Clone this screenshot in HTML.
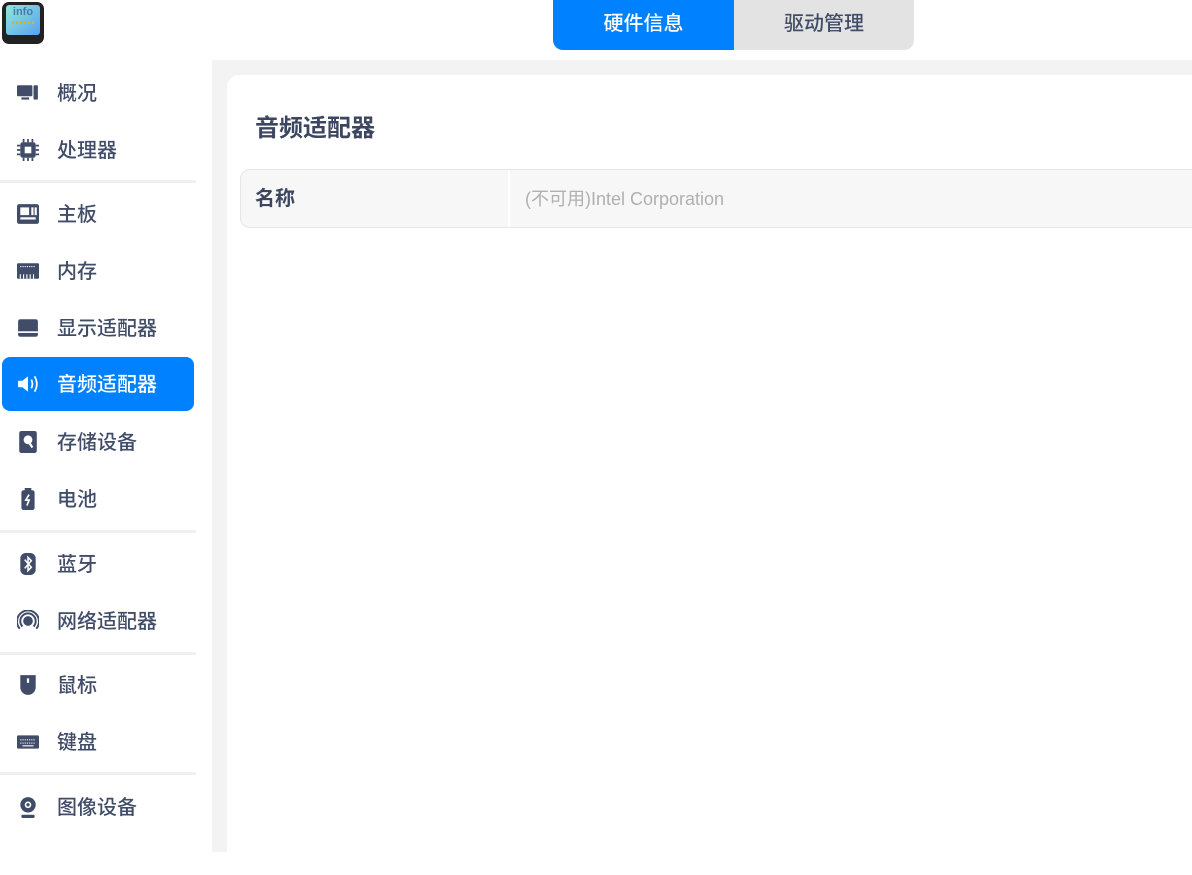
<!DOCTYPE html>
<html><head><meta charset="utf-8"><style>
*{margin:0;padding:0;box-sizing:border-box}
body{width:1192px;height:852px;overflow:hidden;background:#fff;font-family:"Liberation Sans","Noto Sans CJK SC",sans-serif;position:relative;color:#414d68}
.top{position:absolute;left:0;top:0;width:1192px;height:60px;background:#fff}
.logo{position:absolute;left:2px;top:2px;width:42px;height:42px;border-radius:7px;background:#222;padding:3px 4px}
.logo div{width:100%;height:30px;border-radius:3px;background:linear-gradient(135deg,#8fe8d8,#5aa0f0);font-size:11px;color:#4a7aa8;text-align:center;font-weight:bold;line-height:14px}
.logo i{display:block;margin:2px auto 0;width:22px;height:3px;background:repeating-linear-gradient(90deg,#e8b000 0 2px,transparent 2px 4px)}
.tabs{position:absolute;left:553px;top:0;width:361px;height:50px;border-radius:0 0 10px 10px;overflow:hidden;display:flex;font-size:20px;font-weight:500}
.tabs div{height:50px;line-height:48px;text-align:center}
.t1{width:181px;background:#0081ff;color:#fff}
.t2{width:180px;background:#e3e3e3;color:#414d68}
.grey{position:absolute;left:0;top:60px;width:1192px;height:792px;background:#f3f3f3}
.side{position:absolute;left:0;top:60px;width:212px;height:792px;background:#fff}
.item{position:absolute;left:2px;width:192px;height:54px;font-size:20px;font-weight:500;line-height:56px;padding-left:55px;color:#414d68}
.item.act{background:#0081ff;color:#fff;border-radius:8px}
.ic{position:absolute;left:15px;top:16px;width:22px;height:22px}
.sep{position:absolute;left:0;width:196px;height:3px;background:#f0f0f0}
.card{position:absolute;left:227px;top:75px;width:980px;height:800px;background:#fff;border-radius:12px 0 0 0}
.title{position:absolute;left:255px;top:108px;font-size:24px;font-weight:bold;color:#3c4660}
.tbl{position:absolute;left:240px;top:169px;width:970px;height:59px;background:#f7f7f7;border:1px solid #e6e6e6;border-radius:10px 0 0 10px}
.tbl .k{position:absolute;left:14px;top:1px;line-height:57px;font-size:20px;font-weight:bold;color:#3c4660}
.tbl .d{position:absolute;left:267px;top:0;width:2px;height:57px;background:#fff}
.tbl .v{position:absolute;left:284px;top:1px;line-height:57px;font-size:18px;color:#b0b0b0}
</style></head><body>
<div class="top"></div>
<div class="logo"><div>info<i></i></div></div>
<div class="tabs"><div class="t1">硬件信息</div><div class="t2">驱动管理</div></div>
<div class="grey"></div>
<div class="side"></div>
<div class="item" style="top:66px"><svg class="ic" viewBox="0 0 20 20" fill="#414d68"><rect x="0" y="3" width="14" height="10" rx="1"/><rect x="4" y="14" width="7" height="2"/><rect x="15" y="3" width="4" height="13" rx="1"/></svg>概况</div>
<div class="item" style="top:123px"><svg class="ic" viewBox="0 0 20 20" fill="#414d68"><rect x="3" y="3" width="14" height="14" rx="2"/><path d="M6 0v3M10 0v3M14 0v3M6 17v3M10 17v3M14 17v3M0 6h3M0 10h3M0 14h3M17 6h3M17 10h3M17 14h3" stroke="#414d68" stroke-width="1.6"/><rect x="7" y="7" width="6" height="6" fill="#fff"/></svg>处理器</div>
<div class="sep" style="top:180px"></div>
<div class="item" style="top:187px"><svg class="ic" viewBox="0 0 20 20" fill="#414d68"><rect x="0" y="1" width="20" height="18" rx="2"/><rect x="3" y="4" width="8" height="7" fill="#fff"/><rect x="13" y="4" width="2" height="7" fill="#fff"/><rect x="16" y="4" width="2" height="7" fill="#fff"/><rect x="3" y="13" width="14" height="2" fill="#fff"/></svg>主板</div>
<div class="item" style="top:244px"><svg class="ic" viewBox="0 0 20 20" fill="#414d68"><rect x="0" y="3" width="20" height="14" rx="1"/><path d="M3 6h14" stroke="#fff" stroke-dasharray="1 1"/><path d="M3 13v4M6 13v4M9 13v4M12 13v4M15 13v4" stroke="#fff"/></svg>内存</div>
<div class="item" style="top:301px"><svg class="ic" viewBox="0 0 20 20" fill="#414d68"><rect x="1" y="2" width="18" height="16" rx="2"/><rect x="1" y="13" width="18" height="1.5" fill="#fff"/></svg>显示适配器</div>
<div class="item act" style="top:357px"><svg class="ic" viewBox="0 0 20 20" fill="#fff"><path d="M1 7h4l5-4v14l-5-4H1z"/><path d="M13 6q2 4 0 8M16 3q4 7 0 14" stroke="#fff" stroke-width="1.6" fill="none"/></svg>音频适配器</div>
<div class="item" style="top:415px"><svg class="ic" viewBox="0 0 20 20" fill="#414d68"><rect x="2" y="0" width="16" height="20" rx="2"/><circle cx="10" cy="8" r="4" fill="#fff"/><path d="M10 9l4 6" stroke="#fff" stroke-width="2"/></svg>存储设备</div>
<div class="item" style="top:472px"><svg class="ic" viewBox="0 0 20 20" fill="#414d68"><rect x="4" y="2" width="12" height="18" rx="2"/><rect x="7" y="0" width="6" height="3"/><path d="M11 6l-3 5h3l-2 5" stroke="#fff" stroke-width="1.5" fill="none"/></svg>电池</div>
<div class="sep" style="top:530px"></div>
<div class="item" style="top:537px"><svg class="ic" viewBox="0 0 20 20" fill="#414d68"><rect x="3" y="0" width="14" height="20" rx="5"/><path d="M7 6l6 7-3 3V4l3 3-6 7" stroke="#fff" stroke-width="1.4" fill="none"/></svg>蓝牙</div>
<div class="item" style="top:594px"><svg class="ic" viewBox="0 0 20 20" fill="none" stroke="#414d68" stroke-width="1.8"><circle cx="10" cy="10" r="3.5" fill="#414d68"/><path d="M5 15a7 7 0 1 1 10 0M2.5 17a10 10 0 1 1 15 0"/></svg>网络适配器</div>
<div class="sep" style="top:652px"></div>
<div class="item" style="top:658px"><svg class="ic" viewBox="0 0 20 20" fill="#414d68"><path d="M3 1h14v11a7 7 0 0 1-14 0z"/><rect x="9" y="4" width="2" height="4" fill="#fff"/></svg>鼠标</div>
<div class="item" style="top:715px"><svg class="ic" viewBox="0 0 20 20" fill="#414d68"><rect x="0" y="4" width="20" height="12" rx="1"/><path d="M3 8h14M3 11h14" stroke="#fff" stroke-dasharray="1 1"/><rect x="5" y="13" width="10" height="1" fill="#fff"/></svg>键盘</div>
<div class="sep" style="top:772px"></div>
<div class="item" style="top:780px"><svg class="ic" viewBox="0 0 20 20" fill="#414d68"><circle cx="10" cy="8" r="7"/><circle cx="10" cy="8" r="3" fill="#fff"/><circle cx="10" cy="8" r="1.5"/><rect x="4" y="17" width="12" height="3" rx="1"/></svg>图像设备</div>
<div class="card"></div>
<div class="title">音频适配器</div>
<div class="tbl"><div class="k">名称</div><div class="d"></div><div class="v">(不可用)Intel Corporation</div></div>
</body></html>
